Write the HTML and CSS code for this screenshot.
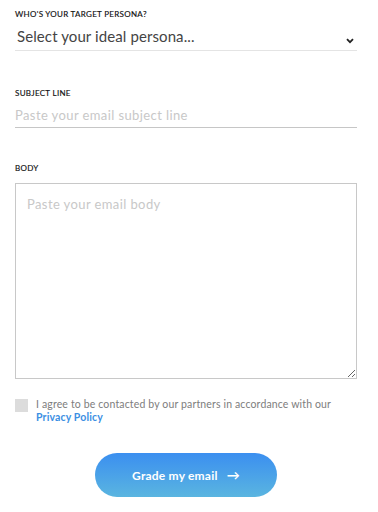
FILE: index.html
```html
<!DOCTYPE html>
<html lang="en">
<head>
  <meta charset="UTF-8" />
  <meta name="viewport" content="width=device-width, initial-scale=1.0"/>
  <title>Email Grader</title>
  <link rel="stylesheet" href="styles.css">
</head>
<body>
  <form class="grader">
    <div class="field field-persona">
      <label class="label" for="persona">Who's your target persona?</label>
      <div class="select-wrap">
        <select id="persona" class="select">
          <option>Select your ideal persona...</option>
        </select>
        <svg class="chevron" width="8" height="6" viewBox="0 0 8 6"><path d="M1 1.2 L4 4.2 L7 1.2" fill="none" stroke="#222" stroke-width="1.8"/></svg>
      </div>
    </div>

    <div class="field field-subject">
      <label class="label" for="subject">Subject line</label>
      <input id="subject" class="input" type="text" placeholder="Paste your email subject line">
    </div>

    <div class="field field-body">
      <label class="label" for="body">Body</label>
      <textarea id="body" class="textarea" placeholder="Paste your email body"></textarea>
    </div>

    <div class="consent">
      <span class="checkbox"></span>
      <p class="consent-text">I agree to be contacted by our partners in accordance with our <a href="#">Privacy Policy</a></p>
    </div>

    <div class="actions">
      <button type="button" class="btn">Grade my email <span class="arrow">&rarr;</span></button>
    </div>
  </form>
</body>
</html>
```

FILE: styles.css
```css
body {
  margin: 0;
  font-family: Lato, "Open Sans", sans-serif;
  background: #fff;
  color: #333;
}
.grader {
  width: 342px;
  padding: 8px 0 0 15px;
}
.label {
  display: block;
  font-size: 8px;
  line-height: 12px;
  font-weight: 400;
  letter-spacing: 0.3px;
  text-transform: uppercase;
  color: #111;
  margin-bottom: 6px;
  -webkit-text-stroke: 0.15px #111;
}
.field-persona { margin-bottom: 36px; }
.field-subject { margin-bottom: 34px; }
.field-body .label { margin-bottom: 9px; }

.select-wrap {
  position: relative;
}
.select {
  appearance: none;
  -webkit-appearance: none;
  width: 100%;
  height: 25px;
  padding: 0 0 4px 2px;
  border: 0;
  border-bottom: 1.5px solid #e4e4e4;
  border-radius: 0;
  background: transparent;
  font-family: inherit;
  font-size: 15px;
  letter-spacing: 0.1px;
  color: #444;
}
.chevron {
  position: absolute;
  right: 3px;
  top: 12px;
}
.input {
  display: block;
  box-sizing: border-box;
  width: 100%;
  height: 23px;
  padding: 0 0 3px 0;
  border: 0;
  border-bottom: 1px solid #c6c6c6;
  font-family: inherit;
  font-size: 13px;
  letter-spacing: 0.4px;
  outline: none;
}
.input::placeholder,
.textarea::placeholder {
  color: #c8c8c8;
}
.textarea {
  display: block;
  box-sizing: border-box;
  width: 100%;
  height: 196px;
  padding: 12px 11px;
  border: 1px solid #c8c8c8;
  font-family: inherit;
  font-size: 13px;
  letter-spacing: 0.4px;
  outline: none;
}
.consent {
  display: flex;
  gap: 8px;
  margin-top: 19px;
}
.checkbox {
  flex: none;
  width: 13px;
  height: 13px;
  margin-top: 1px;
  background: #dcdcdc;
}
.consent-text {
  margin: 0;
  font-size: 10.5px;
  line-height: 13px;
  letter-spacing: 0.15px;
  color: #7d7d7d;
}
.consent-text a {
  color: #3c8fe3;
  font-weight: 700;
  text-decoration: none;
}
.actions {
  display: flex;
  justify-content: center;
  margin-top: 29px;
}
.btn {
  width: 182px;
  height: 44px;
  border: 0;
  border-radius: 22px;
  background: linear-gradient(#3b8ff0, #5ab5e0);
  color: #fff;
  font-family: inherit;
  font-size: 12px;
  font-weight: 700;
  letter-spacing: 0.2px;
}
.arrow {
  margin-left: 6px;
  font-size: 13px;
}
```
